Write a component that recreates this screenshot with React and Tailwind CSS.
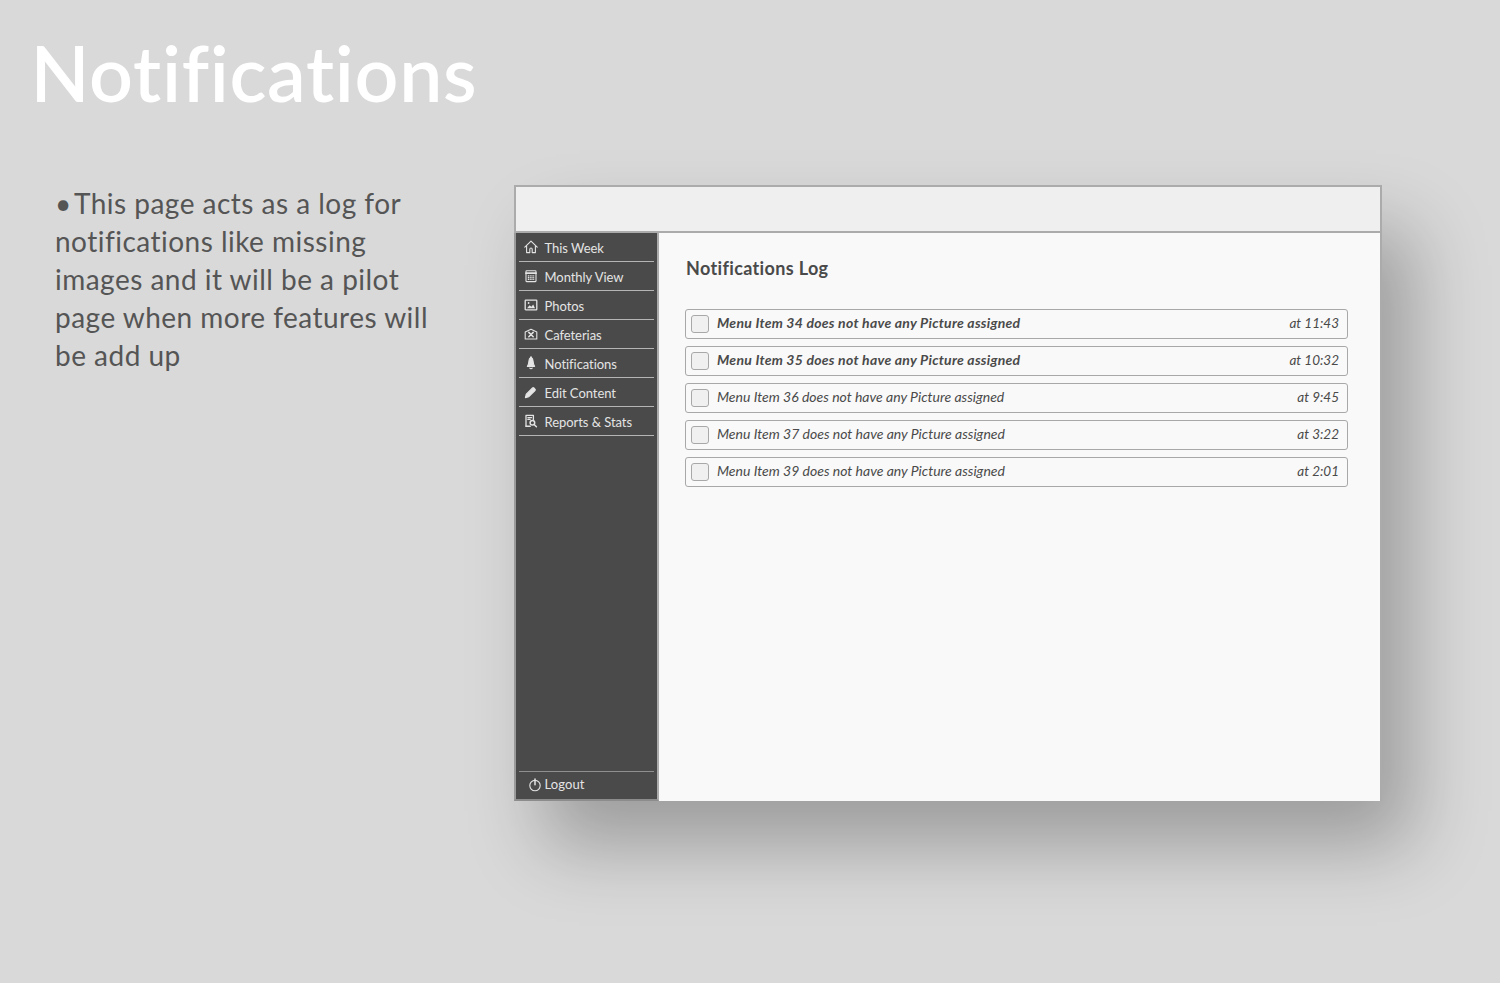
import React from "react";

const F = { fontFamily: '"Lato", "Noto Sans", sans-serif' };

const I = ({ children }) => (
  <svg viewBox="0 0 14 14" width="14" height="14" fill="none" stroke="#e4e4e4" strokeWidth="1.1" strokeLinejoin="round" strokeLinecap="round" className="shrink-0">
    {children}
  </svg>
);

const icons = {
  home: <I><path d="M.8 7.2 7 1.2l6.2 6" /><path d="M2.6 6v6.6h3.2V9.2a1.2 1.2 0 0 1 2.4 0v3.4h3.2V6" /></I>,
  cal: <I><rect x="2" y="1.8" width="10" height="10.8" rx=".6" /><path d="M2 4.2h10" strokeWidth="1.8" /><path d="M3.8 6.8h6.4M3.8 8.6h6.4M3.8 10.4h6.4" strokeWidth="1.2" strokeDasharray="1.2 .6" strokeLinecap="butt" /></I>,
  photo: <I><rect x="1.2" y="2.2" width="11.6" height="9.6" rx=".6" strokeWidth="1.3" /><path d="M3 10.2l2.6-3 1.8 1.6L9.2 6.6 11 10.2z" fill="#e4e4e4" stroke="none" /><circle cx="4.6" cy="5" r=".9" fill="#e4e4e4" stroke="none" /></I>,
  cafe: <I><path d="M1.2 5 7 2.2 12.8 5v7H1.2z" /><path d="M4.8 5.4l4.4 4.4M9.2 5.4l-4.4 4.4" strokeWidth="1.5" /></I>,
  bell: <I><path d="M7 .8c.4 0 .6.4.6 1 1.1.5 1.4 1.8 1.5 3.6.1 2 .6 3.6 1.5 5H3.4c.9-1.4 1.4-3 1.5-5 .1-1.8.4-3.1 1.5-3.6 0-.6.2-1 .6-1z" fill="#e4e4e4" /><path d="M5.8 12c.3.9 2.1.9 2.4 0" /></I>,
  edit: <I><path d="M1.4 12.6l.9-3.4 6.2-6.2a1 1 0 0 1 1.4 0l1.1 1.1a1 1 0 0 1 0 1.4l-6.2 6.2z" fill="#e4e4e4" /></I>,
  report: <I><path d="M2 12.2V1.4h7.4V5.6" strokeWidth="1.3" /><path d="M3.8 3.6h3.8M3.8 5.4h2.4" /><circle cx="8.4" cy="8.8" r="2.3" strokeWidth="1.5" /><path d="M10.1 10.5l2.3 2.3M2 12.2h4.2" strokeWidth="1.5" /></I>,
  power: <I><circle cx="7" cy="7.6" r="5.2" /><path d="M7 1v5.8" strokeWidth="1.5" /></I>,
};

const nav = [
  ["home", "This Week"],
  ["cal", "Monthly View"],
  ["photo", "Photos"],
  ["cafe", "Cafeterias"],
  ["bell", "Notifications"],
  ["edit", "Edit Content"],
  ["report", "Reports & Stats"],
];

const rows = [
  ["Menu Item 34 does not have any Picture assigned", "at 11:43", true],
  ["Menu Item 35 does not have any Picture assigned", "at 10:32", true],
  ["Menu Item 36 does not have any Picture assigned", "at 9:45", false],
  ["Menu Item 37 does not have any Picture assigned", "at 3:22", false],
  ["Menu Item 39 does not have any Picture assigned", "at 2:01", false],
];

export default function App() {
  return (
    <div style={F} className="w-[1500px] h-[983px] overflow-hidden bg-[#d9d9d9] flex">
      <div className="w-[513.5px] shrink-0">
        <h1 className="ml-[30.5px] mt-[29px] text-[77px] leading-[86px] font-semibold text-white tracking-[0.7px] whitespace-nowrap">
          Notifications
        </h1>
        <p className="ml-[55px] mt-[69px] w-[390px] text-[28px] leading-[38px] text-[#555555] tracking-[0.48px]">
          {"•\u200AThis page acts as a log for notifications like missing images and it will be a pilot page when more features will be add up"}
        </p>
      </div>

      <div className="mt-[185px] w-[868.5px] h-[616px] flex flex-col shadow-[30px_45px_70px_rgba(0,0,0,0.28)]">
        <div className="h-[48px] shrink-0 bg-[#efefef] border-2 border-[#ababab]" />
        <div className="flex-1 flex min-h-0 border-r-2 border-[#ababab]">
          <aside className="w-[145.5px] shrink-0 bg-[#4a4a4a] border-l-2 border-b-2 border-r-2 border-l-[#9a9a9a] border-b-[#8c8c8c] border-r-[#ababab] flex flex-col px-[3px] justify-between">
            <nav className="flex flex-col">
              {nav.map(([k, label]) => (
                <div key={k} className="h-[29px] flex items-center gap-[7px] pl-[5px] border-b-[1.5px] border-[#b5b5b5] text-[13px] tracking-[-0.05px] text-[#e4e4e4]">
                  {icons[k]}
                  <span className="pt-[4px]">{label}</span>
                </div>
              ))}
            </nav>
            <div className="h-[28px] flex items-center gap-[3px] pl-[9px] pb-[2px] border-t-[1.5px] border-[#8f8f8f] text-[13px] tracking-[0.1px] text-[#e4e4e4]">
              {icons.power}
              <span>Logout</span>
            </div>
          </aside>
          <main className="flex-1 bg-[#f9f9f9] pl-[26px] pr-[32px] pt-[23px]">
            <h2 className="ml-[1px] text-[18px] leading-[24px] font-bold text-[#4a4a4a] tracking-[0.35px]">Notifications Log</h2>
            <div className="mt-[29px] flex flex-col gap-[7.5px]">
              {rows.map(([text, time, bold]) => (
                <div key={text} className="h-[29.5px] flex items-center border-[1.5px] border-[#a8a8a8] rounded-[3px] pl-[5px] pr-[8px] italic text-[#4a4a4a]">
                  <span className="w-[18px] h-[18px] shrink-0 bg-[#f0f0f0] border-[1.5px] border-[#a8a8a8] rounded-[3px]" />
                  <span className={`ml-[8px] pb-[2px] flex-1 text-[14px] ${bold ? "font-bold tracking-[0.25px]" : ""}`}>{text}</span>
                  <span className="text-[13.5px] pb-[1px]">{time}</span>
                </div>
              ))}
            </div>
          </main>
        </div>
      </div>
    </div>
  );
}
